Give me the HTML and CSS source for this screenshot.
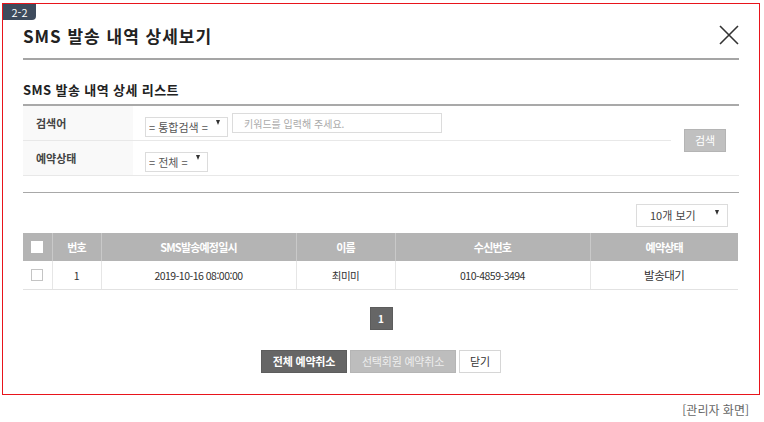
FILE: index.html
```html
<!DOCTYPE html>
<html lang="ko">
<head>
    <meta charset="UTF-8">
    <title>SMS 발송 내역 상세보기</title>
    <link rel="stylesheet" href="styles.css">
</head>
<body>
<div class="pop-frame">
    <span class="pop-badge">2-2</span>
    <div class="pop-head">
        <h2 class="pop-title">SMS 발송 내역 상세보기</h2>
        <a href="javascript:void(0);" class="pop-close">
            <svg width="20" height="20" viewBox="0 0 20 20"><path d="M1 1 L19 19 M19 1 L1 19" stroke="#333" stroke-width="1.6" fill="none"/></svg>
        </a>
    </div>

    <h3 class="sub-title">SMS 발송 내역 상세 리스트</h3>

    <!-- 검색 영역 -->
    <div class="search-box">
        <div class="search-rows">
            <div class="search-row">
                <div class="search-label">검색어</div>
                <div class="search-field">
                    <span class="sel sel-type"><select><option>= 통합검색 =</option></select></span>
                    <input type="text" class="keyword" placeholder="키워드를 입력해 주세요.">
                </div>
            </div>
            <div class="search-row">
                <div class="search-label">예약상태</div>
                <div class="search-field">
                    <span class="sel sel-state"><select><option>= 전체 =</option></select></span>
                </div>
            </div>
        </div>
        <div class="search-btn-col"><a href="javascript:void(0);" class="btn-search">검색</a></div>
    </div>

    <div class="list-top">
        <span class="sel sel-count"><select><option>10개 보기</option></select></span>
    </div>

    <table class="list-table">
        <colgroup>
            <col style="width:29px"><col style="width:49px"><col style="width:195px">
            <col style="width:99px"><col style="width:195px"><col>
        </colgroup>
        <thead>
        <tr>
            <th><input type="checkbox" class="chk"></th>
            <th>번호</th>
            <th>SMS발송예정일시</th>
            <th>이름</th>
            <th>수신번호</th>
            <th>예약상태</th>
        </tr>
        </thead>
        <tbody>
        <tr>
            <td><input type="checkbox" class="chk"></td>
            <td>1</td>
            <td>2019-10-16 08:00:00</td>
            <td>최미미</td>
            <td>010-4859-3494</td>
            <td class="state">발송대기</td>
        </tr>
        </tbody>
    </table>

    <div class="paging"><a href="javascript:void(0);" class="on">1</a></div>

    <div class="btn-area">
        <a href="javascript:void(0);" class="btn btn-dark">전체 예약취소</a>
        <a href="javascript:void(0);" class="btn btn-gray">선택회원 예약취소</a>
        <a href="javascript:void(0);" class="btn btn-white">닫기</a>
    </div>
</div>
<p class="caption">[관리자 화면]</p>
</body>
</html>
```

FILE: styles.css
```css
body {
    margin: 0;
    background: #ffffff;
    font-family: "Noto Sans CJK KR", "Noto Sans", sans-serif;
    color: #333;
}
h2, h3, p, div, span, a {
    margin: 0;
    padding: 0;
}
a {
    text-decoration: none;
}
.pop-frame {
    position: relative;
    width: 758px;
    height: 392px;
    margin: 3px 0 0 2px;
    padding: 0 20px;
    border: 1px solid #e8141b;
    box-sizing: border-box;
}
.pop-badge {
    position: absolute;
    top: 0;
    left: 0;
    width: 33px;
    height: 16px;
    line-height: 16px;
    text-align: center;
    font-size: 11px;
    color: #fff;
    background: #3e4b5d;
    border-radius: 0 0 4px 0;
}
.pop-head {
    display: flex;
    align-items: center;
    justify-content: space-between;
    height: 46px;
    padding-top: 8px;
    border-bottom: 2px solid #a5a5a5;
}
.pop-title {
    font-size: 17px;
    font-weight: bold;
    color: #222;
    letter-spacing: 1px;
}
.pop-close {
    display: block;
    width: 20px;
    height: 20px;
}
.sub-title {
    margin: 20px 0 0 0;
    line-height: 20px;
    padding-bottom: 4px;
    font-size: 13px;
    font-weight: bold;
    color: #222;
    letter-spacing: 0.4px;
    border-bottom: 2px solid #a9a9a9;
}
.search-box {
    display: flex;
    border-bottom: 1px solid #e8e8e8;
}
.search-rows {
    width: 648px;
}
.search-row {
    display: flex;
    height: 34px;
}
.search-row:first-child {
    border-bottom: 1px solid #e8e8e8;
}
.search-label {
    width: 97px;
    padding-left: 13px;
    line-height: 34px;
    font-size: 11px;
    font-weight: bold;
    color: #444;
    background: #f9f9f9;
}
.search-field {
    display: flex;
    align-items: center;
    gap: 4px;
    padding-left: 12px;
}
.sel {
    position: relative;
    display: inline-block;
    height: 20px;
}
.sel select {
    -webkit-appearance: none;
    appearance: none;
    width: 100%;
    height: 100%;
    margin: 0;
    padding: 0 0 0 3px;
    border: 1px solid #dcdcdc;
    border-radius: 0;
    background: #fff;
    font-family: inherit;
    font-size: 11px;
    color: #555;
    outline: none;
}
/* 작은 역삼각형 화살표 */
.sel::after {
    content: "";
    position: absolute;
    top: 50%;
    right: 8px;
    margin-top: -3px;
    border-left: 2.5px solid transparent;
    border-right: 2.5px solid transparent;
    border-top: 5px solid #333;
}
.sel-type { width: 83px; }
.sel-state { width: 63px; }
.keyword {
    width: 210px;
    height: 20px;
    margin: 0;
    padding: 0 0 0 11px;
    border: 1px solid #dcdcdc;
    box-sizing: border-box;
    font-family: inherit;
    font-size: 10px;
    outline: none;
}
.keyword::placeholder {
    color: #aaa;
}
.search-btn-col {
    flex: 1;
    display: flex;
    align-items: center;
    justify-content: center;
}
.btn-search {
    display: block;
    width: 40px;
    height: 21px;
    line-height: 21px;
    text-align: center;
    font-size: 11px;
    color: #fff;
    background: #c0c0c0;
    border: 1px solid #b4b4b4;
}
.list-top {
    margin-top: 16px;
    padding: 8px 11px 9px 0;
    border-top: 1px solid #a8a8a8;
    display: flex;
    justify-content: flex-end;
}
.sel-count {
    width: 92px;
    height: 23px;
}
.sel-count select {
    padding-left: 13px;
    font-size: 11px;
    color: #444;
}
.sel-count::after {
    right: 9px;
}
.list-table {
    width: 715px;
    border-collapse: collapse;
    table-layout: fixed;
    font-size: 11px;
}
.list-table th {
    height: 28px;
    padding: 0;
    background: #b4b4b4;
    color: #fff;
    font-weight: bold;
    letter-spacing: -0.8px;
    border-left: 1px solid #c9c9c9;
}
.list-table td {
    height: 28px;
    padding: 0;
    text-align: center;
    font-size: 10.5px;
    letter-spacing: -0.5px;
    color: #333;
    border-left: 1px solid #e6e6e6;
    border-bottom: 1px solid #e2e2e2;
}
.list-table th:first-child,
.list-table td:first-child {
    border-left: none;
}
.list-table td.state {
    font-size: 11.5px;
}
.chk {
    -webkit-appearance: none;
    appearance: none;
    display: block;
    width: 12px;
    height: 12px;
    margin: 0 auto;
    background: #fff;
    border: 1px solid #c4c4c4;
    border-radius: 0;
}
.list-table th .chk {
    border-color: #fff;
}
.paging {
    margin-top: 17px;
    display: flex;
    justify-content: center;
}
.paging a {
    display: block;
    width: 21px;
    height: 21px;
    line-height: 21px;
    text-align: center;
    font-size: 10px;
    font-weight: bold;
    color: #fff;
    background: #666;
    border: 1px solid #5c5c5c;
}
.btn-area {
    margin-top: 20px;
    display: flex;
    justify-content: center;
    gap: 3px;
}
.btn {
    display: block;
    height: 21px;
    line-height: 21px;
    padding: 0 10px;
    font-size: 11px;
    text-align: center;
    letter-spacing: -0.2px;
}
.btn-dark {
    width: 64px;
    color: #fff;
    font-weight: bold;
    background: #666;
    border: 1px solid #5d5d5d;
}
.btn-gray {
    width: 84px;
    color: #eee;
    background: #bdbdbd;
    border: 1px solid #b5b5b5;
}
.btn-white {
    width: 20px;
    color: #333;
    background: #fff;
    border: 1px solid #d6d6d6;
}
.caption {
    margin-top: 6px;
    padding-right: 15px;
    text-align: right;
    font-size: 12px;
    color: #666;
}
```
